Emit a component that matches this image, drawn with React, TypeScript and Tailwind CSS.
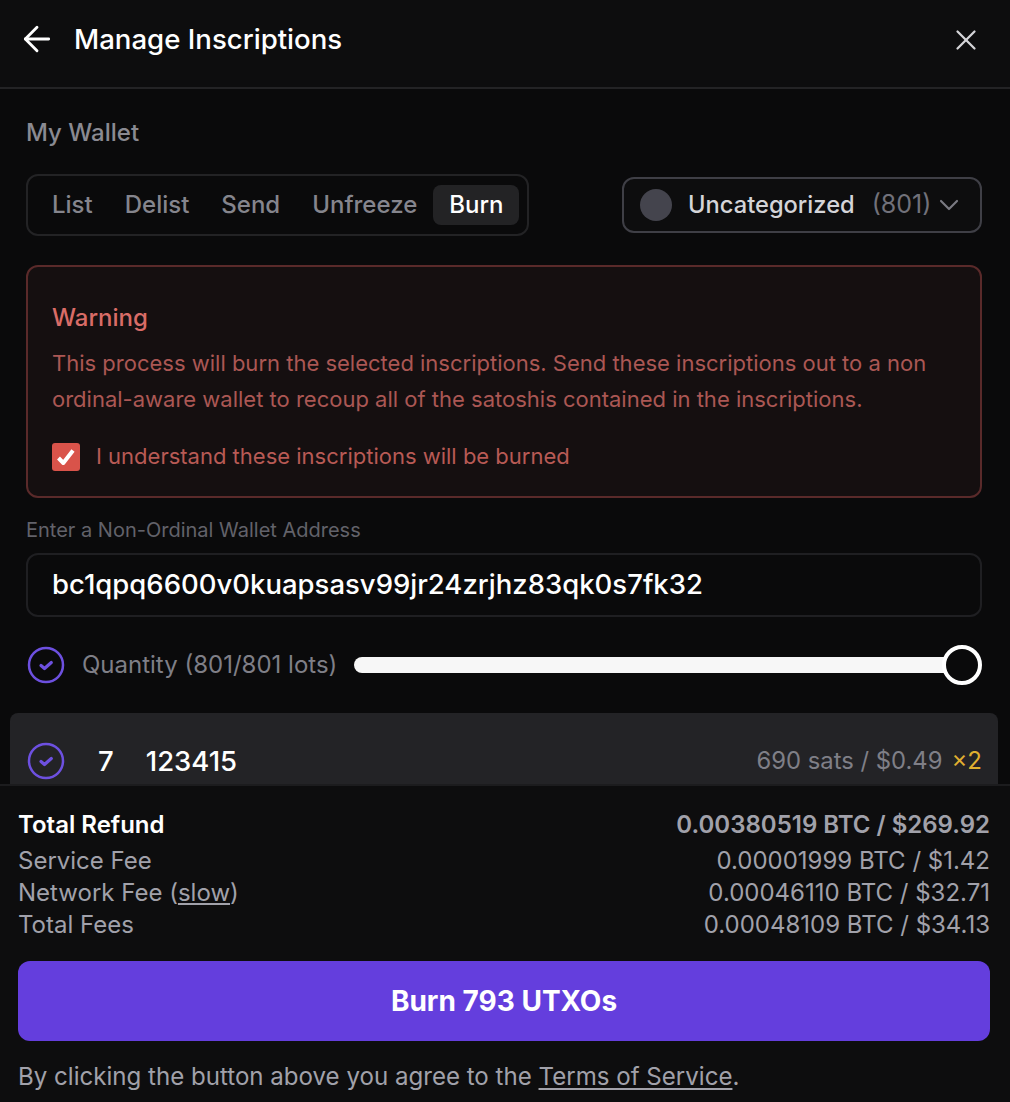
import { ArrowLeft, X, ChevronDown } from "lucide-react";

const tabs = ["List", "Delist", "Send", "Unfreeze", "Burn"];

const fees = [
  { label: "Service Fee", value: "0.00001999 BTC / $1.42" },
  { label: "Network Fee", value: "0.00046110 BTC / $32.71", slow: true },
  { label: "Total Fees", value: "0.00048109 BTC / $34.13" },
];

const CircleCheck = () => (
  <svg width="38" height="38" viewBox="0 0 38 38" fill="none" className="ml-px shrink-0">
    <circle cx="19" cy="19" r="17" stroke="#6d50e0" strokeWidth="2.5" />
    <path d="M14 19.5l3.5 3 6.8-6" stroke="#6d50e0" strokeWidth="3.2" strokeLinecap="round" strokeLinejoin="round" />
  </svg>
);

const App = () => {
  return (
    <div className="w-[1010px] h-[1102px] overflow-hidden flex flex-col bg-[#0a0a0b] text-white font-['Inter',sans-serif]">
      {/* Header */}
      <div className="h-[89px] shrink-0 flex items-center justify-between pl-[17px] pr-[27px] pb-[8px] border-b-2 border-[#232325] bg-[#0d0d0e]">
        <div className="flex items-center gap-[17px]">
          <ArrowLeft size={40} strokeWidth={1.7} />
          <span className="text-[27.6px] font-medium">Manage Inscriptions</span>
        </div>
        <X size={34} strokeWidth={1.6} className="text-[#d4d4d8]" />
      </div>

      {/* Body */}
      <div className="flex-1 min-h-0 overflow-hidden">
        <div className="pl-[26px] pr-[28px] pt-[30px]">
          <div className="text-[24px] leading-[28px] font-medium text-[#8a8a92]">My Wallet</div>

          <div className="mt-[27px] flex items-center justify-between">
            <div className="h-[62px] flex items-center pl-[8px] pr-[8px] border-2 border-[#232325] rounded-[12px]">
              {tabs.map((t) => (
                <div
                  key={t}
                  className={
                    t === "Burn"
                      ? "h-[40px] px-[16px] flex items-center rounded-[8px] bg-[#232325] text-[24px] font-medium text-white"
                      : "h-[40px] px-[16px] flex items-center text-[24px] font-medium text-[#85858d]"
                  }
                >
                  {t}
                </div>
              ))}
            </div>

            <div className="w-[360px] h-[56px] flex items-center border-2 border-[#3f3f46] rounded-[12px] pl-[16px] bg-[#0d0d0e]">
              <div className="w-[32px] h-[32px] rounded-full bg-[#44444d] shrink-0" />
              <span className="ml-[16px] text-[23.7px] font-medium text-[#d4d4d8]">Uncategorized</span>
              <span className="ml-[17px] text-[25px] text-[#71717a]">(801)</span>
              <ChevronDown size={32} strokeWidth={1.6} className="ml-[2px] text-[#7a7a82] shrink-0" />
            </div>
          </div>

          {/* Warning */}
          <div className="mt-[29px] h-[233px] border-2 border-[#5a2a2a] rounded-[12px] bg-[#150f10] px-[24px] pt-[37px]">
            <div className="text-[24px] leading-[28px] font-medium text-[#d96c67]">Warning</div>
            <p className="mt-[13px] text-[22px] leading-[36px] text-[#ab5754]">
              This process will burn the selected inscriptions. Send these inscriptions out to a non ordinal-aware wallet to recoup all of the satoshis contained in the inscriptions.
            </p>
            <div className="mt-[23px] flex items-center gap-[16px]">
              <div className="w-[28px] h-[28px] rounded-[3px] bg-[#d9534a] shrink-0">
                <svg width="28" height="28" viewBox="0 0 28 28" fill="none">
                  <path d="M6.5 15l4.8 5L21 7.5" stroke="#fff" strokeWidth="4" strokeLinejoin="round" />
                </svg>
              </div>
              <span className="text-[22px] text-[#b85a55]">I understand these inscriptions will be burned</span>
            </div>
          </div>

          {/* Address */}
          <div className="mt-[20px] text-[20px] leading-[24px] text-[#62626a]">Enter a Non-Ordinal Wallet Address</div>
          <div className="mt-[11px] h-[64px] flex items-center border-2 border-[#1f1f22] rounded-[12px] px-[24px] text-[27.5px] font-medium text-white">
            bc1qpq6600v0kuapsasv99jr24zrjhz83qk0s7fk32
          </div>

          {/* Quantity */}
          <div className="mt-[29px] flex items-center h-[38px]">
            <CircleCheck />
            <span className="ml-[17px] text-[24px] text-[#7f7f87] whitespace-nowrap">Quantity (801/801 lots)</span>
            <div className="ml-[17px] flex-1 flex items-center">
              <div className="flex-1 h-[16px] rounded-l-full bg-[#f7f7f7]" />
              <div className="w-[40px] h-[40px] -ml-[2px] rounded-full border-[4px] border-white bg-[#0a0a0b] shrink-0" />
            </div>
          </div>
        </div>

        {/* Row */}
        <div className="mt-[29px] ml-[10px] mr-[12px] h-[100px] rounded-t-[8px] bg-[#232326] pl-[16px] pr-[16px] pt-[29px] flex items-start">
          <CircleCheck />
          <span className="ml-[33px] text-[27.5px] leading-[38px] font-medium">7</span>
          <span className="ml-[32px] text-[27.5px] leading-[38px] font-medium">123415</span>
          <span className="ml-auto text-[23.8px] leading-[38px] text-[#7f7f87]">690 sats / $0.49</span>
          <span className="ml-[9px] text-[24px] leading-[38px] text-[#e0b030]">×2</span>
        </div>
      </div>

      {/* Footer */}
      <div className="h-[318px] shrink-0 border-t-2 border-[#1c1c1e] bg-[#0d0d0e] pl-[18px] pr-[20px] pt-[23px]">
        <div className="mb-[4px] flex justify-between text-[24px] leading-[32px] font-semibold">
          <span className="text-white">Total Refund</span>
          <span className="text-[#a1a1aa]">0.00380519 BTC / $269.92</span>
        </div>
        {fees.map((f) => (
          <div key={f.label} className="flex justify-between text-[24px] leading-[32px] text-[#a1a1aa]">
            <span>
              {f.label}
              {f.slow && (
                <>
                  {" "}(<span className="underline">slow</span>)
                </>
              )}
            </span>
            <span>{f.value}</span>
          </div>
        ))}
        <div className="mt-[20px] h-[80px] rounded-[12px] bg-[#643edd] flex items-center justify-center text-[28px] font-bold">
          Burn 793 UTXOs
        </div>
        <div className="mt-[20px] text-[24.08px] leading-[32px] text-[#a1a1aa]">
          By clicking the button above you agree to the <span className="underline underline-offset-[3px]">Terms of Service</span>.
        </div>
      </div>
    </div>
  );
};

export default App;
